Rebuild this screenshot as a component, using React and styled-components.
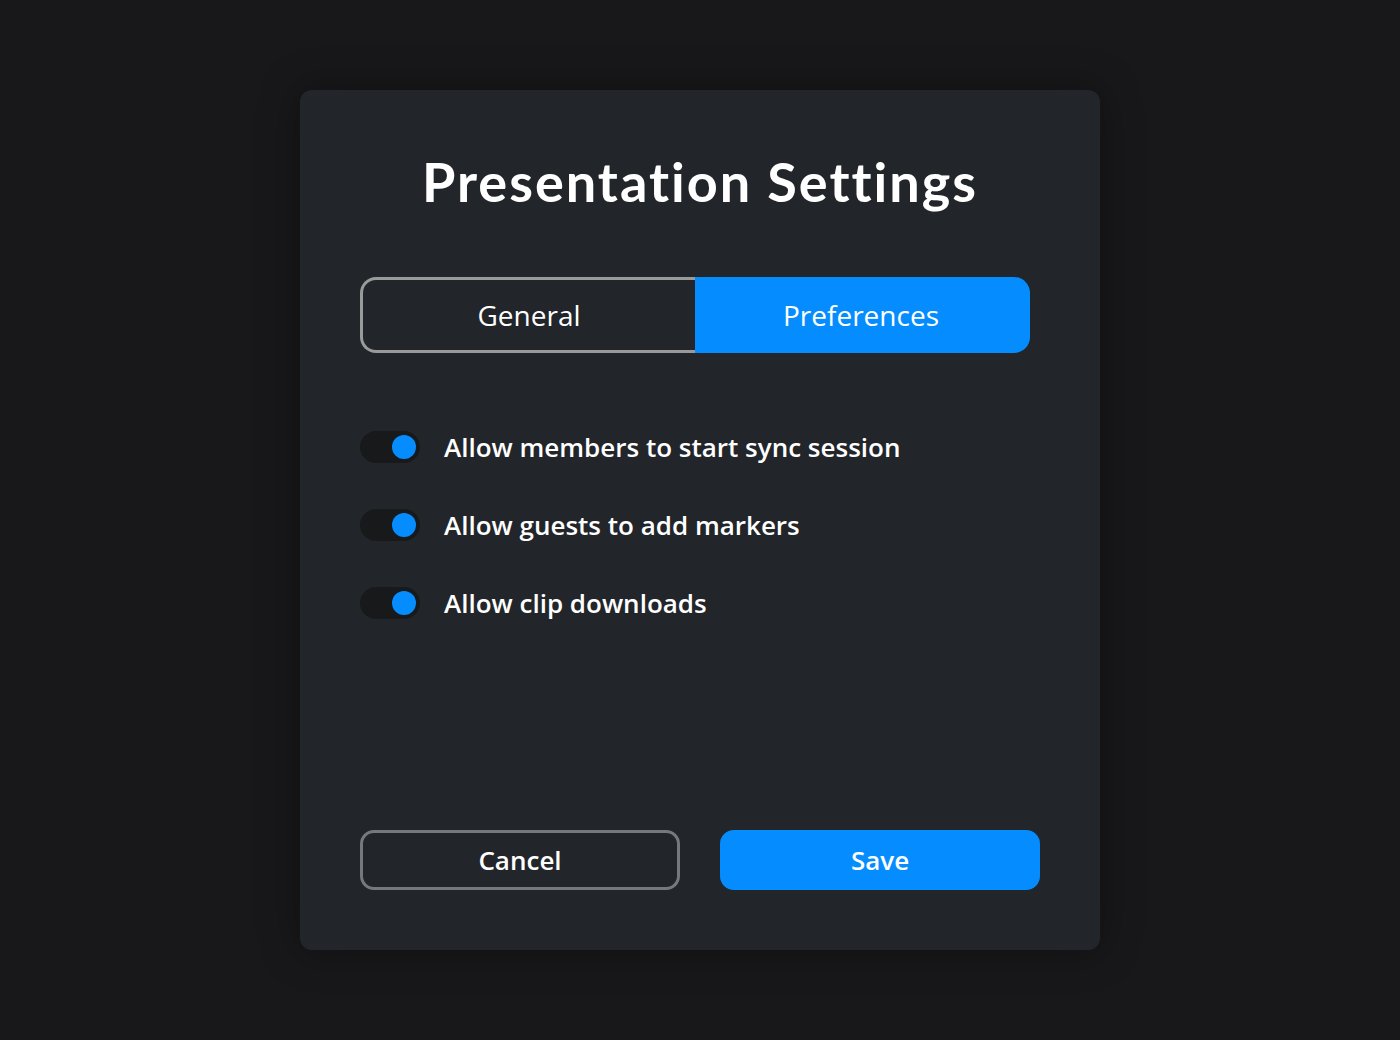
import React, { useState } from "react";
import styled, { createGlobalStyle } from "styled-components";

const GlobalStyle = createGlobalStyle`
  html, body {
    margin: 0;
    padding: 0;
    background: #18181a;
  }
  body {
    font-family: "Open Sans", "Noto Sans", sans-serif;
    color: #fff;
  }
`;

const Page = styled.div`
  width: 1400px;
  height: 1040px;
  display: flex;
  align-items: center;
  justify-content: center;
`;

const Modal = styled.div`
  width: 800px;
  height: 860px;
  box-sizing: border-box;
  padding: 60px;
  background: #22252a;
  border-radius: 12px;
  box-shadow: 0 0 40px rgba(0, 0, 0, 0.35);
  display: flex;
  flex-direction: column;
`;

const Title = styled.h1`
  margin: 0;
  font-family: "Lato", sans-serif;
  font-weight: 700;
  font-size: 54px;
  letter-spacing: 2px;
  line-height: 64px;
  text-align: center;
  color: #fff;
`;

const Tabs = styled.div`
  display: flex;
  width: 670px;
  height: 76px;
  margin-top: 63px;
`;

const Tab = styled.button`
  flex: 1;
  box-sizing: border-box;
  font-family: "Open Sans", sans-serif;
  font-size: 28px;
  color: #fff;
  cursor: pointer;
  border: 3px solid ${(p) => (p.$active ? "#058dff" : "#9a9a9a")};
  border-${(p) => (p.$side === "left" ? "right" : "left")}: none;
  background: ${(p) => (p.$active ? "#058dff" : "transparent")};
  border-radius: ${(p) => (p.$side === "left" ? "16px 0 0 16px" : "0 16px 16px 0")};
`;

const Options = styled.div`
  display: flex;
  flex-direction: column;
  gap: 46px;
  margin-top: 78px;
`;

const Option = styled.label`
  display: flex;
  align-items: center;
  gap: 24px;
  font-size: 26px;
  font-weight: 600;
  line-height: 32px;
  cursor: pointer;
`;

const Track = styled.span`
  width: 60px;
  height: 32px;
  border-radius: 16px;
  background: #18191b;
  position: relative;
  flex-shrink: 0;
`;

const Knob = styled.span`
  position: absolute;
  top: 4px;
  left: ${(p) => (p.$on ? "32px" : "4px")};
  width: 24px;
  height: 24px;
  border-radius: 50%;
  background: ${(p) => (p.$on ? "#058dff" : "#6b6e73")};
`;

const Footer = styled.div`
  margin-top: auto;
  display: flex;
  gap: 40px;
`;

const Button = styled.button`
  flex: 1;
  height: 60px;
  box-sizing: border-box;
  border-radius: 14px;
  font-family: "Open Sans", sans-serif;
  font-size: 26px;
  font-weight: 600;
  color: #fff;
  cursor: pointer;
  border: 3px solid ${(p) => (p.$primary ? "#058dff" : "#75787c")};
  background: ${(p) => (p.$primary ? "#058dff" : "transparent")};
`;

const options = [
  "Allow members to start sync session",
  "Allow guests to add markers",
  "Allow clip downloads",
];

const Toggle = ({ on }) => (
  <Track>
    <Knob $on={on} />
  </Track>
);

const App = () => {
  const [tab, setTab] = useState("preferences");
  const [values, setValues] = useState([true, true, true]);

  return (
    <>
      <GlobalStyle />
      <Page>
        <Modal>
          <Title>Presentation Settings</Title>
          <Tabs>
            <Tab $side="left" $active={tab === "general"} onClick={() => setTab("general")}>
              General
            </Tab>
            <Tab $side="right" $active={tab === "preferences"} onClick={() => setTab("preferences")}>
              Preferences
            </Tab>
          </Tabs>
          <Options>
            {options.map((text, i) => (
              <Option
                key={text}
                onClick={() => setValues(values.map((v, j) => (j === i ? !v : v)))}
              >
                <Toggle on={values[i]} />
                {text}
              </Option>
            ))}
          </Options>
          <Footer>
            <Button>Cancel</Button>
            <Button $primary>Save</Button>
          </Footer>
        </Modal>
      </Page>
    </>
  );
};

export default App;
